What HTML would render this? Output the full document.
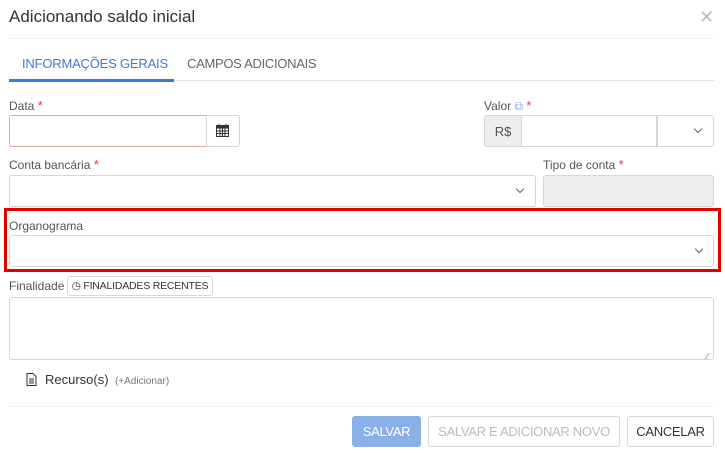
<!DOCTYPE html>
<html><head><meta charset="utf-8"><style>
*{box-sizing:border-box;margin:0;padding:0}
body{width:725px;height:453px;background:#fff;font-family:"Liberation Sans",sans-serif;color:#333;position:relative;overflow:hidden}
.a{position:absolute;white-space:nowrap}
.lbl{font-size:12px;color:#555}
.req{color:#e53935;font-size:13px}
.box{border:1px solid #d6d6d6;border-radius:3px;background:#fff}
.chev{position:absolute;width:6px;height:6px;border-right:1.2px solid #666;border-bottom:1.2px solid #666;transform:rotate(45deg)}
.btn{position:absolute;top:416px;height:31px;border-radius:3px;font-size:13px;display:flex;align-items:center;justify-content:center;white-space:nowrap;letter-spacing:-0.3px}
</style></head><body>
<div class="a" style="left:9px;top:7px;font-size:17px;color:#333">Adicionando saldo inicial</div>
<div class="a" style="left:699px;top:8px;font-size:18px;color:#bbb;line-height:18px">✕</div>
<div class="a" style="left:9px;top:38px;width:705px;height:1px;background:#f0f0f0"></div>

<div class="a" style="left:22px;top:56px;font-size:13px;color:#3a7bd5;letter-spacing:-0.2px">INFORMAÇÕES GERAIS</div>
<div class="a" style="left:187px;top:56px;font-size:13px;color:#666;letter-spacing:-0.3px">CAMPOS ADICIONAIS</div>
<div class="a" style="left:9px;top:80px;width:705px;height:1px;background:#e2e2e2"></div>
<div class="a" style="left:9px;top:79px;width:165px;height:3px;background:#3a7bd5"></div>

<div class="a lbl" style="left:9px;top:98px">Data <span class="req">*</span></div>
<div class="a" style="left:9px;top:115px;width:198px;height:32px;border:1px solid #f0a19b;border-radius:3px 0 0 3px"></div>
<div class="a box" style="left:206px;top:115px;width:34px;height:32px;border-radius:0 3px 3px 0"></div>
<svg class="a" style="left:216px;top:124px" width="13" height="13" viewBox="0 0 13 13"><rect x="0.5" y="1.5" width="12" height="11" fill="none" stroke="#333"/><rect x="0.5" y="1.5" width="12" height="3" fill="#333"/><path d="M3 0v3M10 0v3M1 7h11M1 9.5h11M4 4v8M6.5 4v8M9 4v8" stroke="#333" stroke-width="1"/></svg>

<div class="a lbl" style="left:484px;top:98px">Valor <span style="color:#8ab0e8">⧉</span> <span class="req">*</span></div>
<div class="a" style="left:484px;top:115px;width:38px;height:32px;background:#eee;border:1px solid #d6d6d6;border-radius:3px 0 0 3px;font-size:13px;color:#555;display:flex;align-items:center;justify-content:center">R$</div>
<div class="a box" style="left:521px;top:115px;width:136px;height:32px;border-radius:0"></div>
<div class="a box" style="left:657px;top:115px;width:57px;height:32px;border-radius:0 3px 3px 0"></div>
<div class="chev" style="left:695px;top:126px"></div>

<div class="a lbl" style="left:9px;top:157px">Conta bancária <span class="req">*</span></div>
<div class="a box" style="left:9px;top:175px;width:527px;height:32px"></div>
<div class="chev" style="left:517px;top:186px"></div>
<div class="a lbl" style="left:543px;top:157px">Tipo de conta <span class="req">*</span></div>
<div class="a" style="left:543px;top:175px;width:171px;height:32px;background:#eee;border:1px solid #d6d6d6;border-radius:3px"></div>

<div class="a" style="left:4px;top:208px;width:717px;height:64px;border:3px solid #e00000"></div>
<div class="a lbl" style="left:9px;top:219px">Organograma</div>
<div class="a box" style="left:9px;top:235px;width:705px;height:32px"></div>
<div class="chev" style="left:696px;top:246px"></div>

<div class="a lbl" style="left:9px;top:279px">Finalidade</div>
<div class="a box" style="left:67px;top:276px;width:146px;height:20px;font-size:10.5px;color:#333;display:flex;align-items:center;justify-content:center;white-space:nowrap;letter-spacing:-0.2px">◷&nbsp;FINALIDADES RECENTES</div>
<div class="a box" style="left:9px;top:297px;width:705px;height:63px"></div>
<div class="a" style="left:706px;top:352px;font-size:8px;color:#999">⁄⁄</div>

<svg class="a" style="left:26px;top:373px" width="11" height="13" viewBox="0 0 11 13"><path d="M1 .5h6l3 3v9H1z" fill="none" stroke="#333"/><path d="M3 6h5M3 8h5M3 10h5" stroke="#333"/></svg>
<div class="a" style="left:45px;top:372px;font-size:13px;color:#333">Recurso(s) <span style="font-size:10px;color:#777">&nbsp;(+Adicionar)</span></div>

<div class="a" style="left:9px;top:406px;width:705px;height:1px;background:#f0f0f0"></div>
<div class="btn" style="left:352px;width:69px;background:#8ab0e8;color:#fff">SALVAR</div>
<div class="btn box" style="left:428px;width:192px;color:#bbb">SALVAR E ADICIONAR NOVO</div>
<div class="btn box" style="left:627px;width:87px;color:#333">CANCELAR</div>
</body></html>
